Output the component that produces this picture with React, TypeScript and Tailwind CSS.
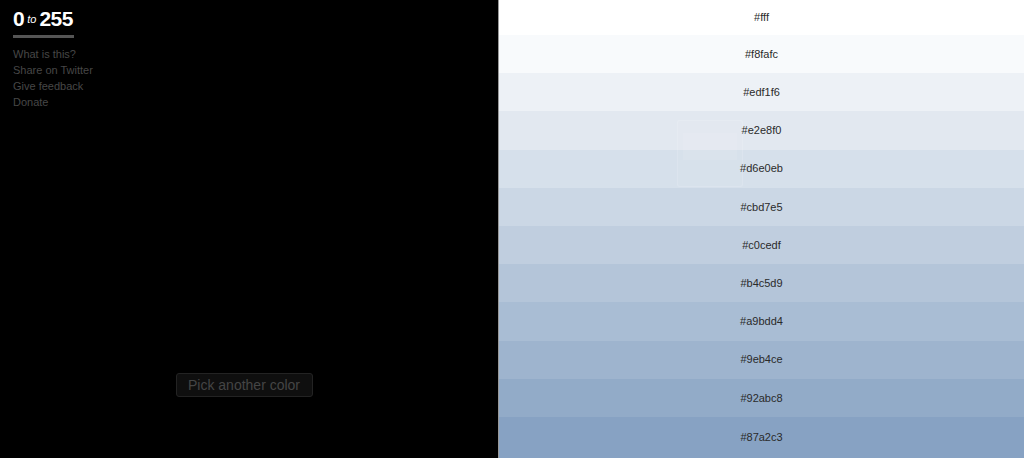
const SHADES = [
  'fff',
  'f8fafc',
  'edf1f6',
  'e2e8f0',
  'd6e0eb',
  'cbd7e5',
  'c0cedf',
  'b4c5d9',
  'a9bdd4',
  '9eb4ce',
  '92abc8',
  '87a2c3',
];

const LINKS = ['What is this?', 'Share on Twitter', 'Give feedback', 'Donate'];

export default function App() {
  return (
    <div className="flex w-[1024px] h-[458px] overflow-hidden font-['Liberation_Sans',Arial,sans-serif]">
      {/* Left panel */}
      <div className="relative w-[498px] h-full bg-black flex flex-col">
        <div className="pl-[13px] pt-[8px]">
          <div className="inline-flex flex-col">
            <div className="flex items-baseline text-white font-bold leading-none">
              <span className="text-[21px] tracking-[-0.5px]">0</span>
              <span className="text-[11px] italic font-normal mx-[3px] relative -top-[3px]">to</span>
              <span className="text-[21px] tracking-[-0.5px]">255</span>
            </div>
            <div className="mt-[6px] h-[3px] w-[61px] bg-[#555]" />
          </div>
          <ul className="mt-[8px] text-[11px] leading-[16px] text-[#474747]">
            {LINKS.map((l) => (
              <li key={l}>{l}</li>
            ))}
          </ul>
        </div>
        <div className="flex-1" />
        <div className="flex justify-center pb-[61px] pr-[10px]">
          <button
            type="button"
            className="h-[24px] w-[137px] rounded-[3px] border border-[#232323] bg-[#0f0f0f] text-[14px] text-[#454545]"
          >
            Pick another color
          </button>
        </div>
      </div>

      {/* Shades */}
      <div className="relative flex-1 h-full flex flex-col border-l border-[#999]">
        {SHADES.map((s, i) => (
          <div
            key={s}
            className={`flex items-center justify-center text-[11px] text-[#2a2a2a] ${
              i === 0 ? 'h-[35px] shrink-0' : i === SHADES.length - 1 ? 'flex-1' : 'h-[38.2px] shrink-0'
            }`}
            style={{ backgroundColor: `#${s}` }}
          >
            #{s}
          </div>
        ))}
        {/* faded copy tooltip */}
        <div className="absolute left-[178px] top-[120px] w-[66px] h-[67px] rounded-[3px] bg-white/[0.04] border border-white/[0.12]">
          <div className="mx-[5px] mt-[12px] h-[27px] bg-white/[0.08]" />
        </div>
      </div>
    </div>
  );
}
